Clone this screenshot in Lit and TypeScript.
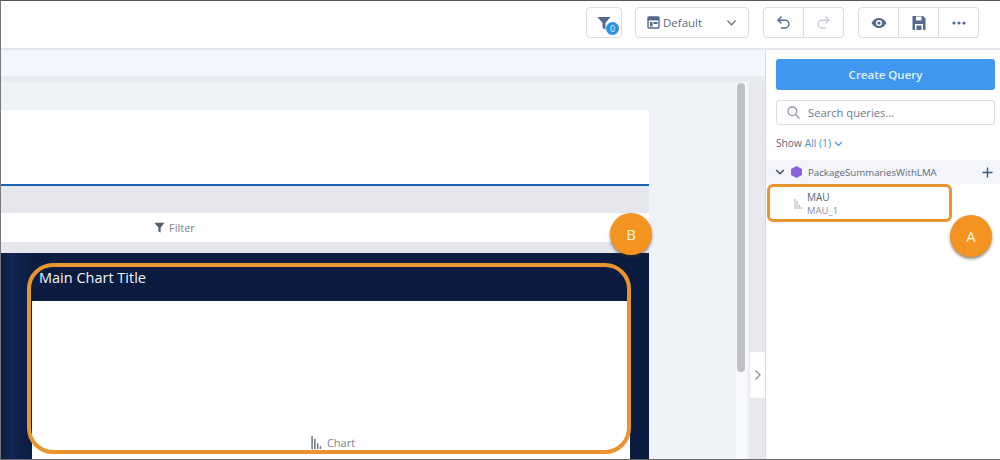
import { LitElement, html, css } from "lit";
import { customElement } from "lit/decorators.js";

@customElement("app-root")
export class AppRoot extends LitElement {
  static styles = css`
    :host { display: block; width: 1000px; height: 460px; overflow: hidden; position: relative; background: #fff;
      font-family: "Open Sans", "Noto Sans", sans-serif; color: #54698d; }
    * { box-sizing: border-box; }
    .frame { width: 1000px; height: 460px; display: flex; flex-direction: column; border-top: 1px solid #55565a; border-left: 1px solid #77787c; border-bottom: 1px solid #66676b; }
    .top { height: 49px; flex: none; display: flex; align-items: flex-start; justify-content: flex-end; padding: 6px 21px 0 0; border-bottom: 2px solid #e3e6ec; background: #fff; }
    .btn { height: 31px; border: 1px solid #d8dde6; border-radius: 4px; background: #fff; display: flex; align-items: center; justify-content: center; }
    .filter { width: 36px; margin-right: 13px; position: relative; }
    .count { position: absolute; left: 19px; top: 14px; width: 13px; height: 13px; border-radius: 50%; background: #2e8fe0; color: #dff; font-size: 9px; line-height: 13px; text-align: center; }
    .view { width: 114px; margin-right: 14px; justify-content: flex-start; padding: 0 11px; gap: 3px; font-size: 11.5px; color: #5f6b7c; }
    .view .chev { margin-left: auto; }
    .group { display: flex; margin-right: 14px; }
    .group:last-child { margin-right: 0; }
    .group .btn { width: 40px; border-radius: 0; border-left: 0; }
    .group .btn:first-child { width: 41px; border-left: 1px solid #d8dde6; border-radius: 4px 0 0 4px; }
    .group .btn:last-child { border-radius: 0 4px 4px 0; }
    .body { flex: 1; display: flex; min-height: 0; }
    .main { width: 765px; flex: none; display: flex; flex-direction: column; border-right: 1px solid #d8dce3; }
    .band { height: 26px; flex: none; background: #f3f6fc; }
    .band2 { height: 6px; flex: none; background: #e8ebf0; }
    .work { flex: 1; display: flex; min-height: 0; background: #eff2f6; }
    .page { width: 648px; flex: none; padding-top: 28px; display: flex; flex-direction: column; }
    .hdr { height: 74px; flex: none; background: #fff; }
    .rule { height: 2px; flex: none; background: #1a64ae; }
    .gray { height: 27px; flex: none; background: #e5e7ec; }
    .frow { height: 29px; flex: none; background: #fff; display: flex; align-items: center; padding-left: 153px; gap: 4px; font-size: 11px; color: #7d8590; }
    .gray2 { height: 11px; flex: none; background: #e5e7ec; }
    .navy { flex: 1; background: linear-gradient(90deg, #0c1c40, #122754 10px, #0e2049 22px, #0c1c40 32px); padding: 0 19px 0 31px; display: flex; flex-direction: column; }
    .title { height: 48px; flex: none; color: #f2f4f8; font-size: 14.5px; padding: 15px 0 0 7px; line-height: 20px; }
    .chart { flex: 1; background: #fff; display: flex; align-items: flex-end; justify-content: center; padding: 0 0 9px 2px; gap: 4px; font-size: 11px; line-height: 14px; color: #7d8590; }
    .chart svg { margin-bottom: 1px; }
    .gutter { flex: 1; }
    .scrollwrap { width: 11px; flex: none; padding: 1px 2px 0 1px; background: #f8f9fb; margin-right: 2px; }
    .thumb { height: 289px; border-radius: 4px; background: #bfc1c4; }
    .side { width: 16px; flex: none; background: #e7e9ef; padding: 270px 0 0 1px; }
    .handle { height: 46px; background: #fff; display: flex; align-items: center; justify-content: center; }
    .panel { flex: 1; padding: 9px 5px 0 0; display: flex; flex-direction: column; background: #fff; }
    .create { height: 31px; margin-left: 10px; border-radius: 3px; background: #3f97ee; color: #dff3ff; font-size: 11.5px; font-weight: 600; display: flex; align-items: center; justify-content: center; }
    .search { height: 25px; margin: 10px 0 0 10px; border: 1px solid #d8dde6; border-radius: 3px; display: flex; align-items: center; padding-left: 10px; gap: 8px; font-size: 11.2px; color: #6f7a88; }
    .show { margin: 9px 0 0 10px; height: 18px; font-size: 10.2px; color: #5f6670; display: flex; align-items: center; gap: 3px; }
    .show span { color: #4a90d9; }
    .tree { margin: 8px -5px 0 0; height: 24px; background: #f3f5fa; display: flex; align-items: center; padding: 0 7px 0 9px; font-size: 9.7px; color: #5f6a7a; }
    .hex { margin-left: 6px; }
    .tree .name { margin-left: 6px; }
    .tree .plus { margin-left: auto; }
    .item { display: flex; align-items: center; margin: 7px 0 0 0; padding-left: 25px; gap: 2px; }
    .item-text { font-size: 10px; line-height: 13px; color: #59636f; }
    .item-sub { color: #8a929c; font-size: 9.5px; }
    .mark { position: absolute; border: 4px solid #e8952f; pointer-events: none; }
    .m-a { left: 767px; top: 184px; width: 185px; height: 38px; border-radius: 6px; border-width: 3.5px; }
    .m-b { left: 27px; top: 263px; width: 604px; height: 191px; border-radius: 26px; }
    .badge { position: absolute; width: 42px; height: 42px; border-radius: 50%; background: #f39420; color: #fff3dc; font-size: 15px; display: flex; align-items: center; justify-content: center; box-shadow: 0 2px 3px rgba(60,50,30,.55); }
    .b-a { left: 950px; top: 215px; }
    .b-b { left: 610px; top: 213px; }
  `;

  private bars(c: string, h = 13) {
    return html`<svg width="14" height="${h}" viewBox="0 0 14 14" fill="${c}"><rect x="2" y="0" width="1.6" height="14"/><rect x="5" y="3" width="1.6" height="11"/><rect x="8" y="8" width="1.6" height="6"/><rect x="11" y="11" width="1.6" height="3"/></svg>`;
  }

  render() {
    const funnel = (s: number, c: string) => html`<svg width="${s}" height="${s}" viewBox="0 0 14 14" fill="${c}"><path d="M0.5 1h13L8.5 7v6.5l-3-1.5V7z"/></svg>`;
    const chev = html`<svg class="chev" width="11" height="11" viewBox="0 0 12 12" fill="none" stroke="#5f6b7c" stroke-width="1.3"><path d="M1.5 4l4.500 4.500L10.500 4"/></svg>`;
    return html`
      <div class="frame">
        <div class="top">
          <div class="btn filter">${funnel(14, "#54698d")}<span class="count">0</span></div>
          <div class="btn view">
            <svg width="13" height="13" viewBox="0 0 13 13"><rect x="1" y="1" width="11" height="11" rx="1" fill="none" stroke="#54698d" stroke-width="1.4"/><rect x="1" y="1" width="11" height="3.4" fill="#54698d"/><rect x="3" y="6" width="2.5" height="4.5" fill="#54698d"/><rect x="6.5" y="6" width="4" height="2" fill="#54698d"/></svg>
            Default ${chev}
          </div>
          <div class="group">
            <div class="btn"><svg width="15" height="15" viewBox="0 0 15 15" fill="none" stroke="#54698d" stroke-width="1.4"><path d="M2.500 5.200H9a3.900 3.900 0 0 1 0 7.800H5"/><path d="M5.500 1.500L2 5.200l3.500 3.300"/></svg></div>
            <div class="btn"><svg width="15" height="15" viewBox="0 0 15 15" fill="none" stroke="#c9ced6" stroke-width="1.4"><path d="M12.500 5.200H6a3.900 3.900 0 0 0 0 7.800h4"/><path d="M9.500 1.500L13 5.200l-3.500 3.300"/></svg></div>
          </div>
          <div class="group">
            <div class="btn"><svg width="16" height="12" viewBox="0 0 16 12"><path d="M0.500 6C3 2 5.400 1 8 1s5 1 7.500 5c-2.500 4-4.900 5-7.500 5S3 10 .5 6z" fill="#54698d"/><circle cx="8" cy="6" r="3" fill="#fff"/><circle cx="8" cy="6" r="1.600" fill="#54698d"/></svg></div>
            <div class="btn"><svg width="14" height="14" viewBox="0 0 14 14"><path d="M1 0h10l2.500 2.500V14H.5V0z" fill="#54698d"/><rect x="4" y="0.500" width="5.500" height="4" fill="#fff"/><rect x="3" y="8" width="8" height="6" fill="#fff"/><rect x="4.500" y="9.500" width="5" height="4.500" fill="#54698d"/></svg></div>
            <div class="btn"><svg width="14" height="4" viewBox="0 0 14 4" fill="#54698d"><circle cx="2" cy="2" r="1.600"/><circle cx="7" cy="2" r="1.600"/><circle cx="12" cy="2" r="1.600"/></svg></div>
          </div>
        </div>
        <div class="body">
          <div class="main">
            <div class="band"></div>
            <div class="band2"></div>
            <div class="work">
              <div class="page">
                <div class="hdr"></div>
                <div class="rule"></div>
                <div class="gray"></div>
                <div class="frow">${funnel(11, "#54606e")}<span>Filter</span></div>
                <div class="gray2"></div>
                <div class="navy">
                  <div class="title">Main Chart Title</div>
                  <div class="chart">${this.bars("#6d7580")}<span>Chart</span></div>
                </div>
              </div>
              <div class="gutter"></div>
              <div class="scrollwrap"><div class="thumb"></div></div>
              <div class="side">
                <div class="handle"><svg width="8" height="12" viewBox="0 0 8 12" fill="none" stroke="#8a93a0" stroke-width="1.300"><path d="M1.500 1.500L6 6l-4.500 4.500"/></svg></div>
              </div>
            </div>
          </div>
          <div class="panel">
            <div class="create">Create Query</div>
            <div class="search">
              <svg width="13" height="13" viewBox="0 0 13 13" fill="none" stroke="#8d96a3" stroke-width="1.300"><circle cx="5.300" cy="5.300" r="4.300"/><path d="M8.500 8.500L12.500 12.500"/></svg>
              <span>Search queries...</span>
            </div>
            <div class="show">Show <span>All (1)</span><svg width="9" height="9" viewBox="0 0 12 12" fill="none" stroke="#4a90d9" stroke-width="1.500"><path d="M1.500 4l4.500 4.500L10.500 4"/></svg></div>
            <div class="tree">
              <svg width="10" height="10" viewBox="0 0 12 12" fill="none" stroke="#3f4a5a" stroke-width="1.800"><path d="M1.500 3.500l4.500 4.500 4.500-4.500"/></svg>
              <svg class="hex" width="11" height="12" viewBox="0 0 11 12" fill="#8763d6"><path d="M5.500 0L11 3v6l-5.500 3L0 9V3z"/></svg>
              <span class="name">PackageSummariesWithLMA</span>
              <svg class="plus" width="11" height="11" viewBox="0 0 11 11" stroke="#3f5a78" stroke-width="1.400"><path d="M5.500 .5v10M.5 5.500h10"/></svg>
            </div>
            <div class="item">
              ${this.bars("#b6bcc4", 10)}
              <div class="item-text"><div>MAU</div><div class="item-sub">MAU_1</div></div>
            </div>
          </div>
        </div>
      </div>
      <div class="mark m-a"></div>
      <div class="mark m-b"></div>
      <div class="badge b-a">A</div>
      <div class="badge b-b">B</div>
    `;
  }
}
